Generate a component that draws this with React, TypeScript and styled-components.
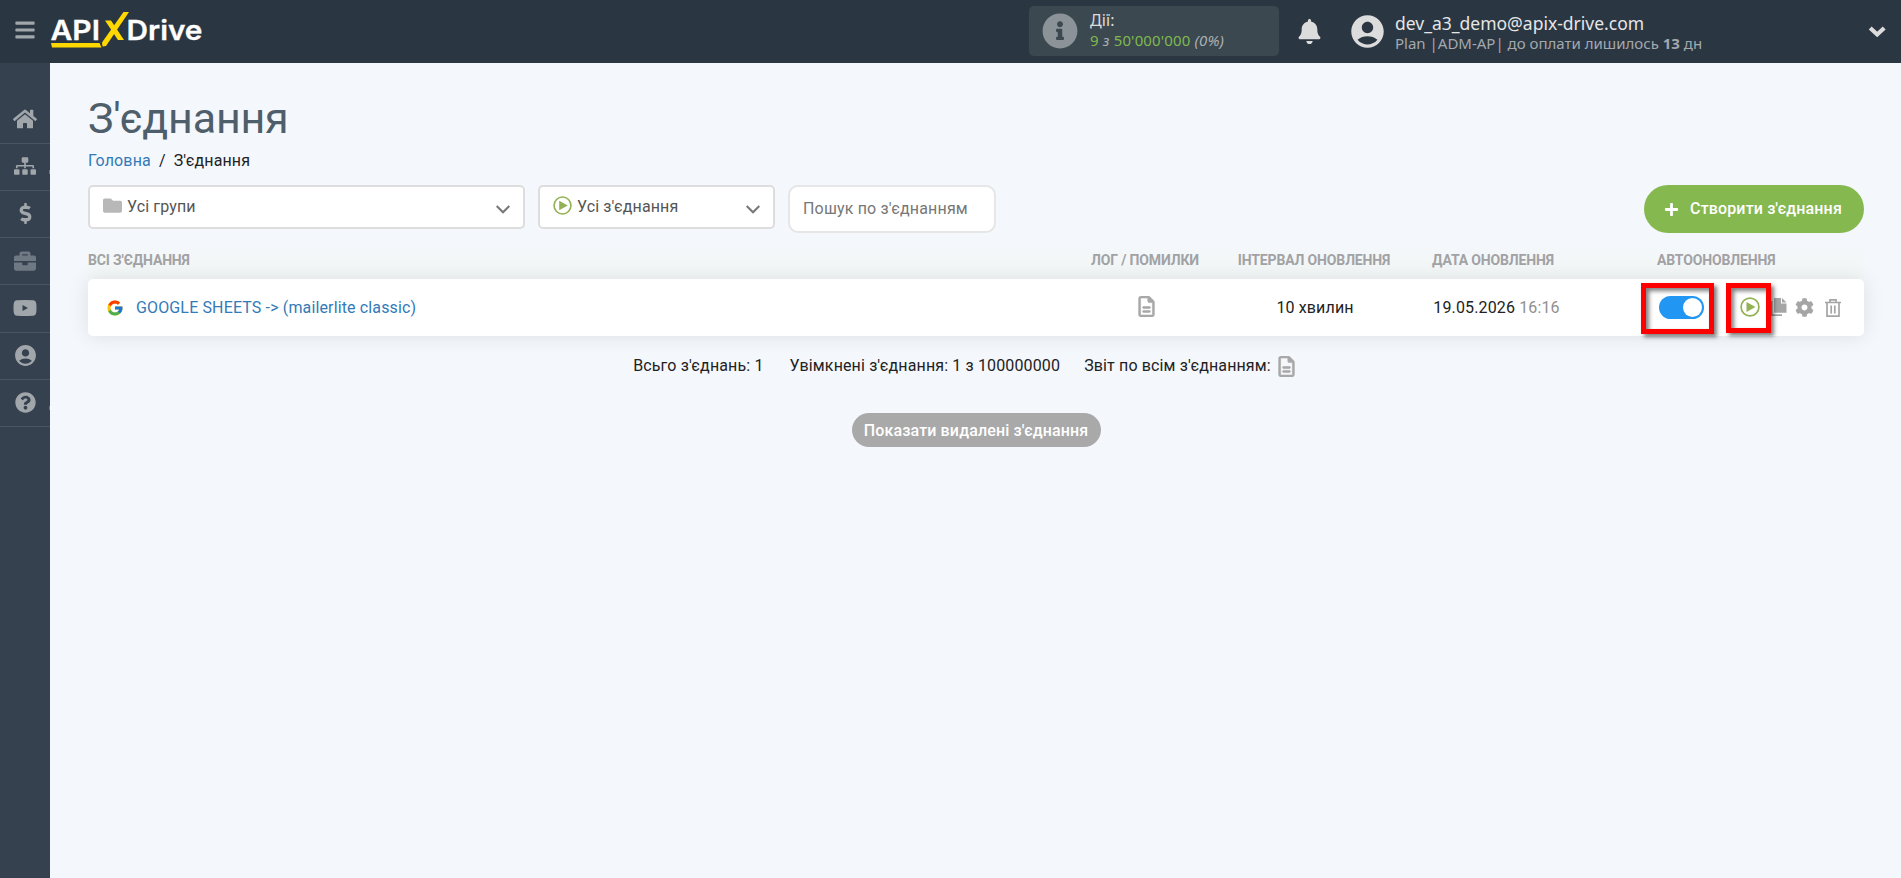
import React from "react";
import styled, { createGlobalStyle, css } from "styled-components";
import {
  FaBars, FaBell, FaBriefcase, FaCog, FaDollarSign, FaFolder,
  FaHome, FaInfoCircle, FaPlus, FaQuestionCircle, FaSitemap,
} from "react-icons/fa";
import { FaRegFileLines } from "react-icons/fa6";
import { MdAccountCircle } from "react-icons/md";
import { FcGoogle } from "react-icons/fc";

const GlobalStyle = createGlobalStyle`
  * { box-sizing: border-box; }
  body {
    margin: 0;
    background: #f4f7fc;
    color: #222;
    font: 16px/20px Roboto, "Liberation Sans", sans-serif;
    letter-spacing: 0.14px;
    overflow: hidden;
  }
  svg { display: block; flex: none; }
`;

const Page = styled.div`
  display: flex;
  flex-direction: column;
  height: 878px;
`;

const Header = styled.header`
  display: flex;
  align-items: center;
  height: 63px;
  flex: none;
  background: #2b3643;
  color: #dcdcdc;
  font-family: "Noto Sans", "Open Sans", sans-serif;
  letter-spacing: 0;
`;

const MenuButton = styled.div`
  width: 50px;
  padding: 0 0 3px 14px;
  color: #a0a6a9;
`;

const LogoSlot = styled.div`
  flex: 1;
  height: 63px;
`;

const Actions = styled.div`
  display: flex;
  align-items: center;
  width: 250px;
  height: 50px;
  margin-bottom: 1px;
  padding-left: 13px;
  gap: 12px;
  border-radius: 5px;
  background: #3c4850;
  color: #8b9399;
`;

const ActionsText = styled.div`
  padding-bottom: 3px;
  font-size: 15px;
  line-height: 20px;
  letter-spacing: 0.14px;
  color: #a9b0b4;
`;

const ActionsTitle = styled.div`
  font-size: 16px;
  color: #dcdcdc;
`;

const Green = styled.span`
  color: #7fb84e;
`;

const BellSlot = styled.div`
  padding: 0 26px 0 18px;
`;

const Account = styled.div`
  display: flex;
  align-items: center;
  width: 520px;
  gap: 8px;
`;

const AccountText = styled.div`
  padding-top: 3px;
`;

const Email = styled.div`
  font-size: 17.5px;
  line-height: 20px;
  color: #e6e6e6;
`;

const Plan = styled.div`
  font-size: 15px;
  line-height: 20px;
  color: #a3a9ad;
`;

const HeaderEnd = styled.div`
  width: 33px;
`;

const Body = styled.div`
  display: flex;
  flex: 1;
`;

const Sidebar = styled.nav`
  width: 50px;
  flex: none;
  padding-top: 34px;
  background: #364150;
`;

const SideItem = styled.div<{ $dim?: boolean; $sub?: boolean; $tall?: boolean }>`
  position: relative;
  display: flex;
  align-items: center;
  justify-content: center;
  height: ${(p) => (p.$tall ? 48 : 47)}px;
  padding-bottom: ${(p) => (p.$dim ? 0 : 2)}px;
  border-bottom: 1px solid #4a5562;
  color: ${(p) => (p.$dim ? "#6f7983" : "#a0a6a9")};
  ${(p) => p.$sub && css`
    &::after {
      content: "";
      position: absolute;
      right: 0;
      bottom: 16px;
      width: 1px;
      height: 4px;
      background: #6f7983;
    }
  `}
`;

const Main = styled.main`
  flex: 1;
  padding: 29px 37px 0 38px;
`;

const Title = styled.h1`
  margin: 0;
  font-size: 43px;
  line-height: 53px;
  font-weight: 400;
  letter-spacing: -0.2px;
  color: #4e5e6a;
`;

const Breadcrumbs = styled.div`
  display: flex;
  gap: 8px;
  padding-top: 6px;
  height: 40px;
`;

const Link = styled.span`
  color: #337ab7;
`;

const Filters = styled.div`
  display: flex;
  align-items: flex-start;
  height: 48px;
`;

const Select = styled.div<{ $width: number }>`
  display: flex;
  align-items: center;
  width: ${(p) => p.$width}px;
  height: 44px;
  margin-right: 13px;
  padding: 0 13px 1px 13px;
  gap: 5px;
  border: 2px solid #ddd;
  border-radius: 5px;
  background: #fff;
  color: #555;
`;

const SelectText = styled.span`
  flex: 1;
`;

const SelectIcon = styled.span`
  padding-bottom: 2px;
`;

const ArrowSlot = styled.span`
  padding-top: 5px;
`;

const Search = styled.div`
  width: 208px;
  height: 48px;
  padding: 12px 13px;
  border: 2px solid #e6e6e6;
  border-radius: 10px;
  background: #fff;
  color: #777;
  letter-spacing: 0.17px;
`;

const CreateButton = styled.div`
  display: flex;
  align-items: center;
  justify-content: center;
  gap: 11px;
  width: 220px;
  height: 48px;
  margin-left: auto;
  padding-right: 2px;
  border-radius: 24px;
  background: #86b850;
  color: #fff;
  font-weight: 500;
`;

const gridColumns = css`
  display: grid;
  grid-template-columns: 957px 200px 138px 220px 261px;
  align-items: center;
`;

const TableHead = styled.div`
  ${gridColumns}
  height: 46px;
  padding-top: 7px;
  background: linear-gradient(#f4f7fc 20%, #f3f7f8 60%);
  color: #a2a2a5;
  font-size: 14px;
  font-weight: 700;
  letter-spacing: -0.15px;
  text-align: center;
  white-space: nowrap;
`;

const HeadCell = styled.span<{ $align?: string; $shift?: number }>`
  justify-self: ${(p) => p.$align ?? "center"};
  padding-left: ${(p) => p.$shift ?? 0}px;
`;

const Row = styled.div`
  ${gridColumns}
  position: relative;
  height: 57px;
  border-radius: 5px;
  background: #fff;
  box-shadow: 0 0 20px rgba(0, 0, 0, 0.1);
`;

const NameCell = styled.div`
  display: flex;
  align-items: center;
  gap: 12px;
  padding-left: 18px;
`;

const CenterCell = styled.div`
  display: flex;
  justify-content: center;
  padding: 0 0 2px 2px;
  color: #a8a8a8;
`;

const TextCell = styled.div<{ $shift?: number }>`
  padding-left: ${(p) => p.$shift ?? 0}px;
  text-align: center;
  white-space: nowrap;
`;

const Muted = styled.span`
  color: #909090;
`;

const Controls = styled.div`
  display: flex;
  align-items: center;
  padding-left: 56px;
  color: #a5a5a5;
`;

const Toggle = styled.div`
  display: flex;
  justify-content: flex-end;
  width: 45px;
  height: 23px;
  padding: 2px;
  margin-right: 36px;
  border-radius: 12px;
  background: #2196f3;
`;

const Knob = styled.div`
  width: 19px;
  height: 19px;
  border-radius: 50%;
  background: #fff;
`;

const IconSlot = styled.div<{ $gap: number }>`
  margin-right: ${(p) => p.$gap}px;
  padding-bottom: 1px;
`;

const Marker = styled.div<{ $left: number; $width: number; $height: number }>`
  position: absolute;
  top: 4px;
  left: ${(p) => p.$left}px;
  width: ${(p) => p.$width}px;
  height: ${(p) => p.$height}px;
  border: 5px solid #f00;
  box-shadow: 3px 3px 4px rgba(0, 0, 0, 0.5), inset 3px 3px 4px rgba(0, 0, 0, 0.5);
`;

const Summary = styled.div`
  display: flex;
  justify-content: center;
  align-items: center;
  gap: 26px;
  height: 22px;
  margin-top: 19px;
  padding-right: 22px;
`;

const Report = styled.div`
  display: flex;
  align-items: center;
  gap: 5px;
  margin-left: -2px;
  color: #a8a8a8;
`;

const ReportText = styled.span`
  color: #222;
`;

const ShowDeleted = styled.div`
  width: 249px;
  height: 34px;
  margin: 36px auto 0;
  padding-top: 1px;
  border-radius: 17px;
  background: #a9a9a9;
  color: #fff;
  font-weight: 500;
  line-height: 33px;
  text-align: center;
`;

const Logo = () => (
  <svg width="160" height="63" viewBox="50 0 160 63">
    <g fill="#fff" fontFamily="Inter, Lato, sans-serif" fontWeight="600" fontSize="27.5" stroke="#fff" strokeWidth="0.3">
      <text x="50.5" y="40" textLength="49.5" lengthAdjust="spacingAndGlyphs">API</text>
      <text x="126.5" y="40" textLength="76" lengthAdjust="spacingAndGlyphs">Drive</text>
    </g>
    <path d="M51 43H99.5L101.5 47.5H52Z" fill="#ffd800" />
    <path d="M123.5 12H129L106 46L102.5 46.5L102 42.5Z" fill="#ffd800" />
    <path d="M105 20.5H111L124 40H118Z" fill="#ffd800" />
  </svg>
);

const PlayIcon = ({ size }: { size: number }) => (
  <svg width={size} height={size} viewBox="0 0 20 20">
    <circle cx="10" cy="10" r="8.9" fill="none" stroke="#93b255" strokeWidth="1.7" />
    <path d="M6.5 5L15.5 10L6.5 15Z" fill="#93b255" />
  </svg>
);

const Arrow = () => (
  <svg width="14" height="9" viewBox="0 0 14 9" fill="none" stroke="#777" strokeWidth="2">
    <path d="M0.7 1L7 7.3L13.3 1" />
  </svg>
);

const AccountArrow = () => (
  <svg width="18" height="12" viewBox="0 0 18 12" fill="none" stroke="#dcdcdc" strokeWidth="4.2">
    <path d="M2.200 2L9.200 8.500L16.200 2" />
  </svg>
);

const VideoIcon = () => (
  <svg width="24" height="16" viewBox="0 0 24 16">
    <path fill="currentColor" fillRule="evenodd" d="M4 .3Q12-.3 20 .3Q23 .5 23.3 4Q23.7 8 23.3 12Q23 15.5 20 15.7Q12 16.3 4 15.7Q1 15.5 .7 12Q.3 8 .7 4Q1 .5 4 .3ZM9.5 5V11L15 8Z" />
  </svg>
);

const CopyIcon = () => (
  <svg width="18" height="18" viewBox="0 0 18 18" fill="currentColor">
    <path d="M5 0H12V5.500H17.500V14.800H5Z" />
    <path d="M13 0L17.500 4.500H13Z" />
    <path d="M0 3H3.500V16.200H13V18H0Z" />
  </svg>
);

const TrashIcon = () => (
  <svg width="16" height="18" viewBox="0 0 16 18" fill="none" stroke="currentColor" strokeWidth="1.7">
    <path d="M0 3.5H16M5 3V.9H11V3M2 3.5V17.1H14V3.5M6.2 6.5V14.5M9.8 6.5V14.5" />
  </svg>
);

const ReportIcon = ({ size }: { size: number }) => (
  <FaRegFileLines size={size} stroke="currentColor" strokeWidth="14" />
);

export default function App() {
  return (
    <Page>
      <GlobalStyle />
      <Header>
        <MenuButton><FaBars size={22} /></MenuButton>
        <LogoSlot><Logo /></LogoSlot>
        <Actions>
          <FaInfoCircle size={36} />
          <ActionsText>
            <ActionsTitle>Дії:</ActionsTitle>
            <Green>9</Green> <i>з</i> <Green>50'000'000</Green> <i>(0%)</i>
          </ActionsText>
        </Actions>
        <BellSlot><FaBell size={25} /></BellSlot>
        <Account>
          <MdAccountCircle size={39} />
          <AccountText>
            <Email>dev_a3_demo@apix-drive.com</Email>
            <Plan>Plan |ADM-AP| до оплати лишилось <b>13</b> дн</Plan>
          </AccountText>
        </Account>
        <HeaderEnd><AccountArrow /></HeaderEnd>
      </Header>
      <Body>
        <Sidebar>
          <SideItem><FaHome size={24} /></SideItem>
          <SideItem $sub><FaSitemap size={22} /></SideItem>
          <SideItem><FaDollarSign size={21} /></SideItem>
          <SideItem $dim><FaBriefcase size={22} /></SideItem>
          <SideItem $tall><VideoIcon /></SideItem>
          <SideItem><MdAccountCircle size={25} /></SideItem>
          <SideItem $sub><FaQuestionCircle size={21} /></SideItem>
        </Sidebar>
        <Main>
          <Title>З'єднання</Title>
          <Breadcrumbs>
            <Link>Головна</Link><span>/</span><span>З'єднання</span>
          </Breadcrumbs>
          <Filters>
            <Select $width={437}>
              <SelectIcon><FaFolder size={19} color="#b8b8b8" /></SelectIcon>
              <SelectText>Усі групи</SelectText>
              <ArrowSlot><Arrow /></ArrowSlot>
            </Select>
            <Select $width={237}>
              <SelectIcon><PlayIcon size={19} /></SelectIcon>
              <SelectText>Усі з'єднання</SelectText>
              <ArrowSlot><Arrow /></ArrowSlot>
            </Select>
            <Search>Пошук по з'єднанням</Search>
            <CreateButton><FaPlus size={15} />Створити з'єднання</CreateButton>
          </Filters>
          <TableHead>
            <HeadCell $align="start">ВСІ З'ЄДНАННЯ</HeadCell>
            <HeadCell>ЛОГ / ПОМИЛКИ</HeadCell>
            <HeadCell>ІНТЕРВАЛ ОНОВЛЕННЯ</HeadCell>
            <HeadCell>ДАТА ОНОВЛЕННЯ</HeadCell>
            <HeadCell $align="start" $shift={54}>АВТООНОВЛЕННЯ</HeadCell>
          </TableHead>
          <Row>
            <NameCell>
              <FcGoogle size={18} />
              <Link>GOOGLE SHEETS -&gt; (mailerlite classic)</Link>
            </NameCell>
            <CenterCell><ReportIcon size={21} /></CenterCell>
            <TextCell $shift={2}>10 хвилин</TextCell>
            <TextCell $shift={7}>19.05.2026 <Muted>16:16</Muted></TextCell>
            <Controls>
              <Toggle><Knob /></Toggle>
              <IconSlot $gap={9}><PlayIcon size={20} /></IconSlot>
              <IconSlot $gap={8}><CopyIcon /></IconSlot>
              <IconSlot $gap={11}><FaCog size={19} /></IconSlot>
              <TrashIcon />
            </Controls>
            <Marker $left={1553} $width={73} $height={51} />
            <Marker $left={1638} $width={45} $height={50} />
          </Row>
          <Summary>
            <span>Всьго з'єднань: 1</span>
            <span>Увімкнені з'єднання: 1 з 100000000</span>
            <Report>
              <ReportText>Звіт по всім з'єднанням:</ReportText>
              <ReportIcon size={21} />
            </Report>
          </Summary>
          <ShowDeleted>Показати видалені з'єднання</ShowDeleted>
        </Main>
      </Body>
    </Page>
  );
}
